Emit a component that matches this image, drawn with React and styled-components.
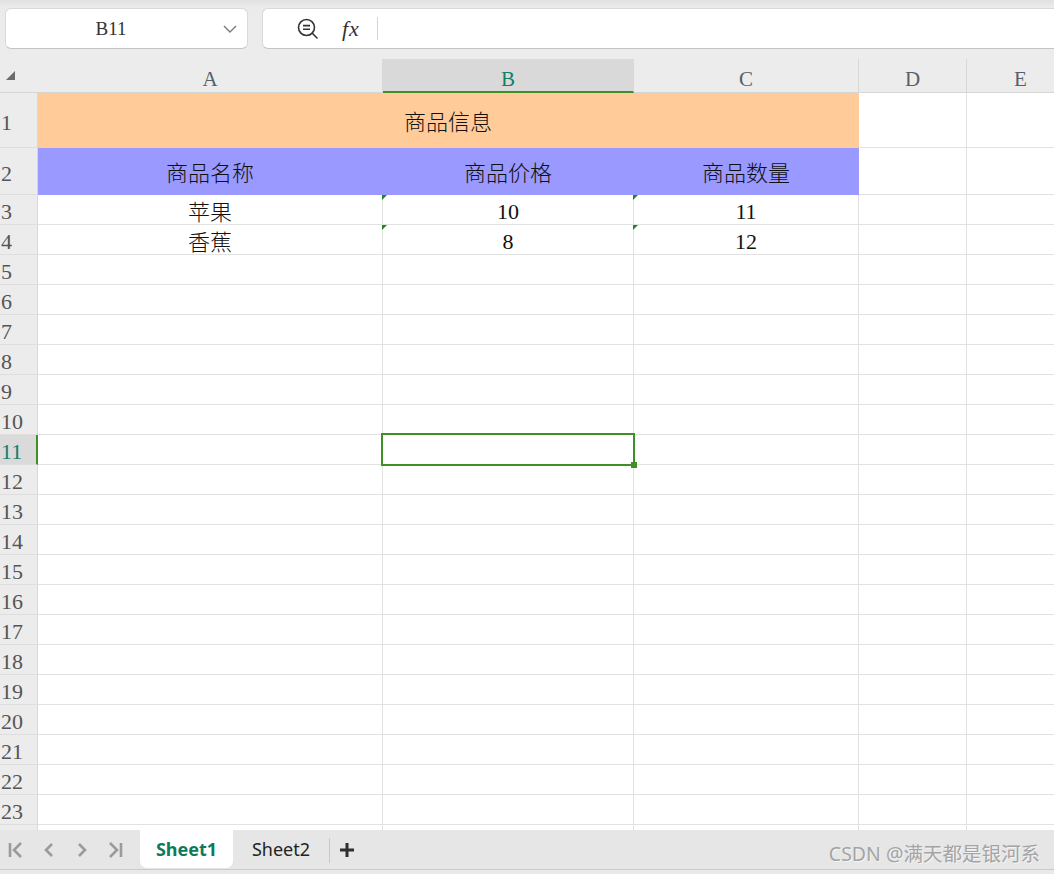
import React from "react";
import styled, { createGlobalStyle, css } from "styled-components";

const GREEN = "#3f8e26";
const TEAL = "#137e6b";

const GlobalStyle = createGlobalStyle`
  html, body {
    margin: 0;
    padding: 0;
    background: #ececec;
    overflow: hidden;
  }
  * {
    box-sizing: border-box;
  }
`;

const columns = ["A", "B", "C", "D", "E"];

const sheetData = {
  1: [{ text: "商品信息", span: 3, bg: "#ffcc99" }, {}, {}],
  2: [
    { text: "商品名称", bg: "#9999ff" },
    { text: "商品价格", bg: "#9999ff" },
    { text: "商品数量", bg: "#9999ff" },
    {},
    {},
  ],
  3: [{ text: "苹果" }, { text: "10", flag: true }, { text: "11", flag: true }, {}, {}],
  4: [{ text: "香蕉" }, { text: "8", flag: true }, { text: "12", flag: true }, {}, {}],
};

const SELECTED_ROW = 11;
const SELECTED_COL = 1;
const VISIBLE_ROWS = 23;

function App() {
  const rows = [];
  // one extra row so the grid runs to the tab bar, like the partly hidden row 24
  for (let r = 1; r <= VISIBLE_ROWS + 1; r++) {
    const cells = sheetData[r] || columns.map(() => ({}));
    rows.push(
      <React.Fragment key={r}>
        <RowHeader $active={r === SELECTED_ROW}>{r <= VISIBLE_ROWS ? r : ""}</RowHeader>
        {cells.map((c, i) => (
          <Cell
            key={i}
            $bg={c.bg}
            $span={c.span}
            $flag={c.flag}
            $selected={r === SELECTED_ROW && i === SELECTED_COL}
          >
            {c.text}
          </Cell>
        ))}
      </React.Fragment>
    );
  }

  return (
    <>
      <GlobalStyle />
      <Page>
        <TopBar>
          <NameBox>
            <NameText>B11</NameText>
            <svg width="16" height="10" viewBox="0 0 16 10">
              <path d="M2 2 L8 8 L14 2" fill="none" stroke="#7a7a7a" strokeWidth="1.4" />
            </svg>
          </NameBox>
          <FormulaBox>
            <ToolIcon>
              <svg width="24" height="24" viewBox="0 0 24 24">
                <circle cx="10.5" cy="10.5" r="8" fill="none" stroke="#333" strokeWidth="1.6" />
                <path d="M7 8.6 H14 M7 12.2 H14" stroke="#333" strokeWidth="1.6" />
                <path d="M16.3 16.3 L21 21" stroke="#333" strokeWidth="1.6" strokeLinecap="round" />
              </svg>
            </ToolIcon>
            <FxLabel>fx</FxLabel>
            <FormulaDivider />
          </FormulaBox>
        </TopBar>

        <Sheet>
          <Corner>
            <svg width="12" height="12" viewBox="0 0 12 12">
              <polygon points="10,1 10,10 1,10" fill="#6b6b6b" />
            </svg>
          </Corner>
          {columns.map((c, i) => (
            <ColHeader key={c} $active={i === SELECTED_COL}>
              {c}
            </ColHeader>
          ))}
          {rows}
        </Sheet>

        <TabBar>
          <NavGroup>
            <NavButton>
              <svg width="18" height="18" viewBox="0 0 18 18">
                <path d="M3 2 V16 M14 2 L7 9 L14 16" fill="none" stroke="#9b9b9b" strokeWidth="2.6" />
              </svg>
            </NavButton>
            <NavButton>
              <svg width="18" height="18" viewBox="0 0 18 18">
                <path d="M12 3 L6 9 L12 15" fill="none" stroke="#9b9b9b" strokeWidth="2.6" />
              </svg>
            </NavButton>
            <NavButton>
              <svg width="18" height="18" viewBox="0 0 18 18">
                <path d="M6 3 L12 9 L6 15" fill="none" stroke="#9b9b9b" strokeWidth="2.6" />
              </svg>
            </NavButton>
            <NavButton>
              <svg width="18" height="18" viewBox="0 0 18 18">
                <path d="M15 2 V16 M4 2 L11 9 L4 16" fill="none" stroke="#9b9b9b" strokeWidth="2.6" />
              </svg>
            </NavButton>
          </NavGroup>
          <Tab $active>Sheet1</Tab>
          <Tab>Sheet2</Tab>
          <TabDivider />
          <AddButton>
            <svg width="16" height="16" viewBox="0 0 16 16">
              <path d="M8 1 V15 M1 8 H15" stroke="#2f2f2f" strokeWidth="3" />
            </svg>
          </AddButton>
          <Watermark>CSDN @满天都是银河系</Watermark>
        </TabBar>
        <BottomStrip />
      </Page>
    </>
  );
}

export default App;

const Page = styled.div`
  width: 1054px;
  height: 874px;
  display: flex;
  flex-direction: column;
  background: #ececec;
`;

const TopBar = styled.div`
  height: 59px;
  display: flex;
  align-items: flex-start;
  padding: 8px 0 10px 5px;
  background: linear-gradient(#e2e0e0 0, #ebebeb 7px, #ececec 100%);
`;

const NameBox = styled.div`
  width: 243px;
  height: 41px;
  background: #fff;
  border: 1px solid #d9d9d9;
  border-bottom-color: #c4c4c4;
  border-radius: 6px;
  display: flex;
  align-items: center;
  padding: 0 9px 0 0;
`;

const NameText = styled.span`
  flex: 1;
  text-align: center;
  font-family: "Liberation Serif", serif;
  font-size: 19px;
  color: #333;
  padding-right: 6px;
`;

const FormulaBox = styled.div`
  flex: 1;
  height: 41px;
  margin-left: 14px;
  background: #fff;
  border: 1px solid #d9d9d9;
  border-right: none;
  border-bottom-color: #c4c4c4;
  border-radius: 6px 0 0 6px;
  display: flex;
  align-items: center;
  padding-left: 33px;
`;

const ToolIcon = styled.div`
  width: 24px;
  height: 24px;
  display: flex;
`;

const FxLabel = styled.span`
  margin-left: 22px;
  font-family: "Liberation Serif", serif;
  font-style: italic;
  font-size: 22px;
  color: #333;
  letter-spacing: 1px;
`;

const FormulaDivider = styled.div`
  width: 1px;
  height: 23px;
  background: #d4d4d4;
  margin-left: 17px;
`;

const Sheet = styled.div`
  height: 771px;
  overflow: hidden;
  display: grid;
  grid-template-columns: 38px 345px 251px 225px 108px 108px;
  grid-template-rows: 34px 55px 47px;
  grid-auto-rows: 30px;
  background: #fff;
`;

const headerBase = css`
  background: #ececec;
  font-family: "Liberation Serif", serif;
  font-size: 21px;
  display: flex;
  align-items: center;
`;

const Corner = styled.div`
  ${headerBase};
  align-items: flex-end;
  padding: 0 0 10px 5px;
  border-bottom: 1px solid #d6d6d6;
`;

const ColHeader = styled.div`
  ${headerBase};
  justify-content: center;
  padding-top: 8px;
  color: ${(p) => (p.$active ? TEAL : "#56606b")};
  background: ${(p) => (p.$active ? "#d9d9d9" : "#ececec")};
  border-right: 1px solid ${(p) => (p.$active ? "#d9d9d9" : "#d8d8d8")};
  border-bottom: ${(p) => (p.$active ? `2px solid ${GREEN}` : "1px solid #d6d6d6")};
`;

const RowHeader = styled.div`
  ${headerBase};
  padding: 5px 0 0 1px;
  font-size: 22px;
  color: ${(p) => (p.$active ? TEAL : "#555")};
  background: ${(p) => (p.$active ? "#dadada" : "#ececec")};
  border-right: ${(p) => (p.$active ? `2px solid ${GREEN}` : "1px solid #d8d8d8")};
  border-bottom: 1px solid #dedede;
`;

const Cell = styled.div`
  position: relative;
  grid-column: span ${(p) => p.$span || 1};
  display: flex;
  align-items: center;
  justify-content: center;
  padding-top: ${(p) => (p.$flag ? "5px" : "0")};
  background: ${(p) => p.$bg || "#fff"};
  border-right: 1px solid ${(p) => p.$bg || "#e2e2e2"};
  border-bottom: 1px solid ${(p) => p.$bg || "#e2e2e2"};
  font-family: "Liberation Serif", "Noto Sans CJK SC", serif;
  font-weight: 300;
  font-size: 22px;
  color: #111;

  ${(p) =>
    p.$flag &&
    css`
      &::before {
        content: "";
        position: absolute;
        left: -1px;
        top: 0;
        border-top: 5px solid #1d8a1d;
        border-right: 5px solid transparent;
      }
    `}

  ${(p) =>
    p.$selected &&
    css`
      z-index: 2;
      &::after {
        content: "";
        position: absolute;
        left: -2px;
        top: -2px;
        right: -2px;
        bottom: -2px;
        border: 2.5px solid ${GREEN};
      }
      &::before {
        content: "";
        position: absolute;
        right: -4px;
        bottom: -4px;
        width: 6px;
        height: 6px;
        background: ${GREEN};
        z-index: 3;
      }
    `}
`;

const TabBar = styled.div`
  height: 40px;
  display: flex;
  align-items: flex-start;
  background: #e6e6e6;
  border-bottom: 1px solid #cbcbcb;
`;

const NavGroup = styled.div`
  display: flex;
  height: 39px;
  margin-left: -1px;
  align-items: center;
`;

const NavButton = styled.div`
  width: 33px;
  display: flex;
  justify-content: center;
`;

const Tab = styled.div`
  height: 38px;
  width: ${(p) => (p.$active ? "93px" : "96px")};
  margin-left: ${(p) => (p.$active ? "9px" : "0")};
  display: flex;
  align-items: center;
  justify-content: center;
  font-family: "Noto Sans", "Open Sans", sans-serif;
  font-size: 18px;
  font-weight: ${(p) => (p.$active ? 700 : 400)};
  color: ${(p) => (p.$active ? "#0e7a5c" : "#222")};
  background: ${(p) => (p.$active ? "#fff" : "transparent")};
  border-radius: 0 0 7px 7px;
`;

const TabDivider = styled.div`
  width: 1px;
  height: 25px;
  margin-top: 8px;
  background: #c9c9c9;
`;

const AddButton = styled.div`
  width: 34px;
  height: 39px;
  display: flex;
  align-items: center;
  justify-content: center;
`;

const Watermark = styled.div`
  margin-left: auto;
  padding-right: 14px;
  height: 39px;
  display: flex;
  align-items: center;
  padding-top: 5px;
  font-family: "Noto Sans", "Noto Sans CJK SC", sans-serif;
  font-size: 19.5px;
  color: #a4a4a4;
  text-shadow: 1px 1px 0 #f4f4f4;
`;

const BottomStrip = styled.div`
  flex: 1;
  background: #e9e9e9;
`;
